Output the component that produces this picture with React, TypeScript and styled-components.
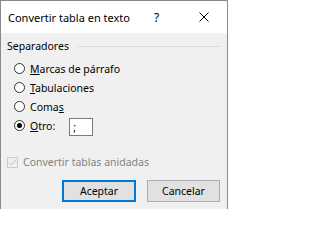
import styled, { createGlobalStyle } from "styled-components";

const GlobalStyle = createGlobalStyle`
  html, body {
    margin: 0;
    padding: 0;
    background: #ffffff;
  }
  body {
    font-family: "Noto Sans", "Open Sans", sans-serif;
    color: #000;
  }
`;

const Dialog = styled.div`
  width: 228px;
  height: 209px;
  box-sizing: border-box;
  border: solid 1px #8a8a8a;
  border-bottom: none;
  display: flex;
  flex-direction: column;
  background: #f0f0f0;
`;

const TitleBar = styled.div`
  height: 32px;
  background: #ffffff;
  display: flex;
  align-items: center;
  padding-left: 7px;
  .title {
    flex: 1;
    font-size: 11px;
    padding-top: 1px;
  }
  .help {
    width: 8px;
    font-size: 12px;
    margin-right: 37px;
    padding-top: 1px;
  }
  .close {
    width: 10px;
    height: 10px;
    margin-right: 18px;
    display: block;
  }
`;

const Body = styled.div`
  flex: 1;
  padding: 6px 6px 0 6px;
  font-size: 10.5px;
`;

const GroupHeader = styled.div`
  display: flex;
  align-items: center;
  height: 14px;
  .line {
    flex: 1;
    height: 1px;
    margin-left: 8px;
    background: #dcdcdc;
  }
`;

const Options = styled.div`
  padding: 6px 0 0 7px;
`;

const Row = styled.label`
  display: flex;
  align-items: center;
  height: 19px;
  gap: 5px;
`;

const Radio = styled.span<{ $checked?: boolean }>`
  width: 11px;
  height: 11px;
  box-sizing: border-box;
  border-radius: 50%;
  border: solid 1px #333;
  background: #fff;
  display: flex;
  align-items: center;
  justify-content: center;
  &::after {
    content: "";
    display: ${(p) => (p.$checked ? "block" : "none")};
    width: 5px;
    height: 5px;
    border-radius: 50%;
    background: #000;
  }
`;

const TextBox = styled.div`
  width: 24px;
  height: 18px;
  box-sizing: border-box;
  border: solid 1px #7a7a7a;
  background: #fff;
  margin: 2px 0 0 9px;
  padding-left: 3px;
  display: flex;
  align-items: center;
`;

const CheckRow = styled.div`
  display: flex;
  align-items: center;
  gap: 5px;
  height: 14px;
  margin-top: 20px;
  color: #838383;
`;

const CheckBox = styled.span`
  width: 11px;
  height: 11px;
  box-sizing: border-box;
  border: solid 1px #cccccc;
  background: #f0f0f0;
  display: flex;
  align-items: center;
  justify-content: center;
`;

const Buttons = styled.div`
  display: flex;
  justify-content: flex-end;
  gap: 11px;
  margin-top: 11px;
  padding-right: 1px;
`;

const Button = styled.button<{ $default?: boolean }>`
  width: ${(p) => (p.$default ? "74px" : "73px")};
  height: 22px;
  box-sizing: border-box;
  padding: 0;
  font-family: inherit;
  font-size: 10.5px;
  color: #000;
  background: #e1e1e1;
  border: ${(p) => (p.$default ? "solid 2px #0078d7" : "solid 1px #adadad")};
`;

const options = [
  { key: "M", rest: "arcas de párrafo" },
  { key: "T", rest: "abulaciones" },
];

const App = () => {
  return (
    <>
      <GlobalStyle />
      <Dialog>
        <TitleBar>
          <span className="title">Convertir tabla en texto</span>
          <span className="help">?</span>
          <svg className="close" viewBox="0 0 10 10">
            <path d="M0.5 0.5 L9.5 9.5 M9.5 0.5 L0.5 9.5" stroke="#000" strokeWidth="1" />
          </svg>
        </TitleBar>
        <Body>
          <GroupHeader>
            <span>Separadores</span>
            <span className="line" />
          </GroupHeader>
          <Options>
            {options.map((o) => (
              <Row key={o.key}>
                <Radio />
                <span>
                  <u>{o.key}</u>
                  {o.rest}
                </span>
              </Row>
            ))}
            <Row>
              <Radio />
              <span>
                Coma<u>s</u>
              </span>
            </Row>
            <Row>
              <Radio $checked />
              <span>
                <u>O</u>tro:
              </span>
              <TextBox>;</TextBox>
            </Row>
          </Options>
          <CheckRow>
            <CheckBox>
              <svg width="9" height="9" viewBox="0 0 9 9">
                <path d="M1 4.5 L3.5 7 L8 1.5" fill="none" stroke="#bdbdbd" strokeWidth="1" />
              </svg>
            </CheckBox>
            <span>Convertir tablas anidadas</span>
          </CheckRow>
          <Buttons>
            <Button $default>Aceptar</Button>
            <Button>Cancelar</Button>
          </Buttons>
        </Body>
      </Dialog>
    </>
  );
};

export default App;
